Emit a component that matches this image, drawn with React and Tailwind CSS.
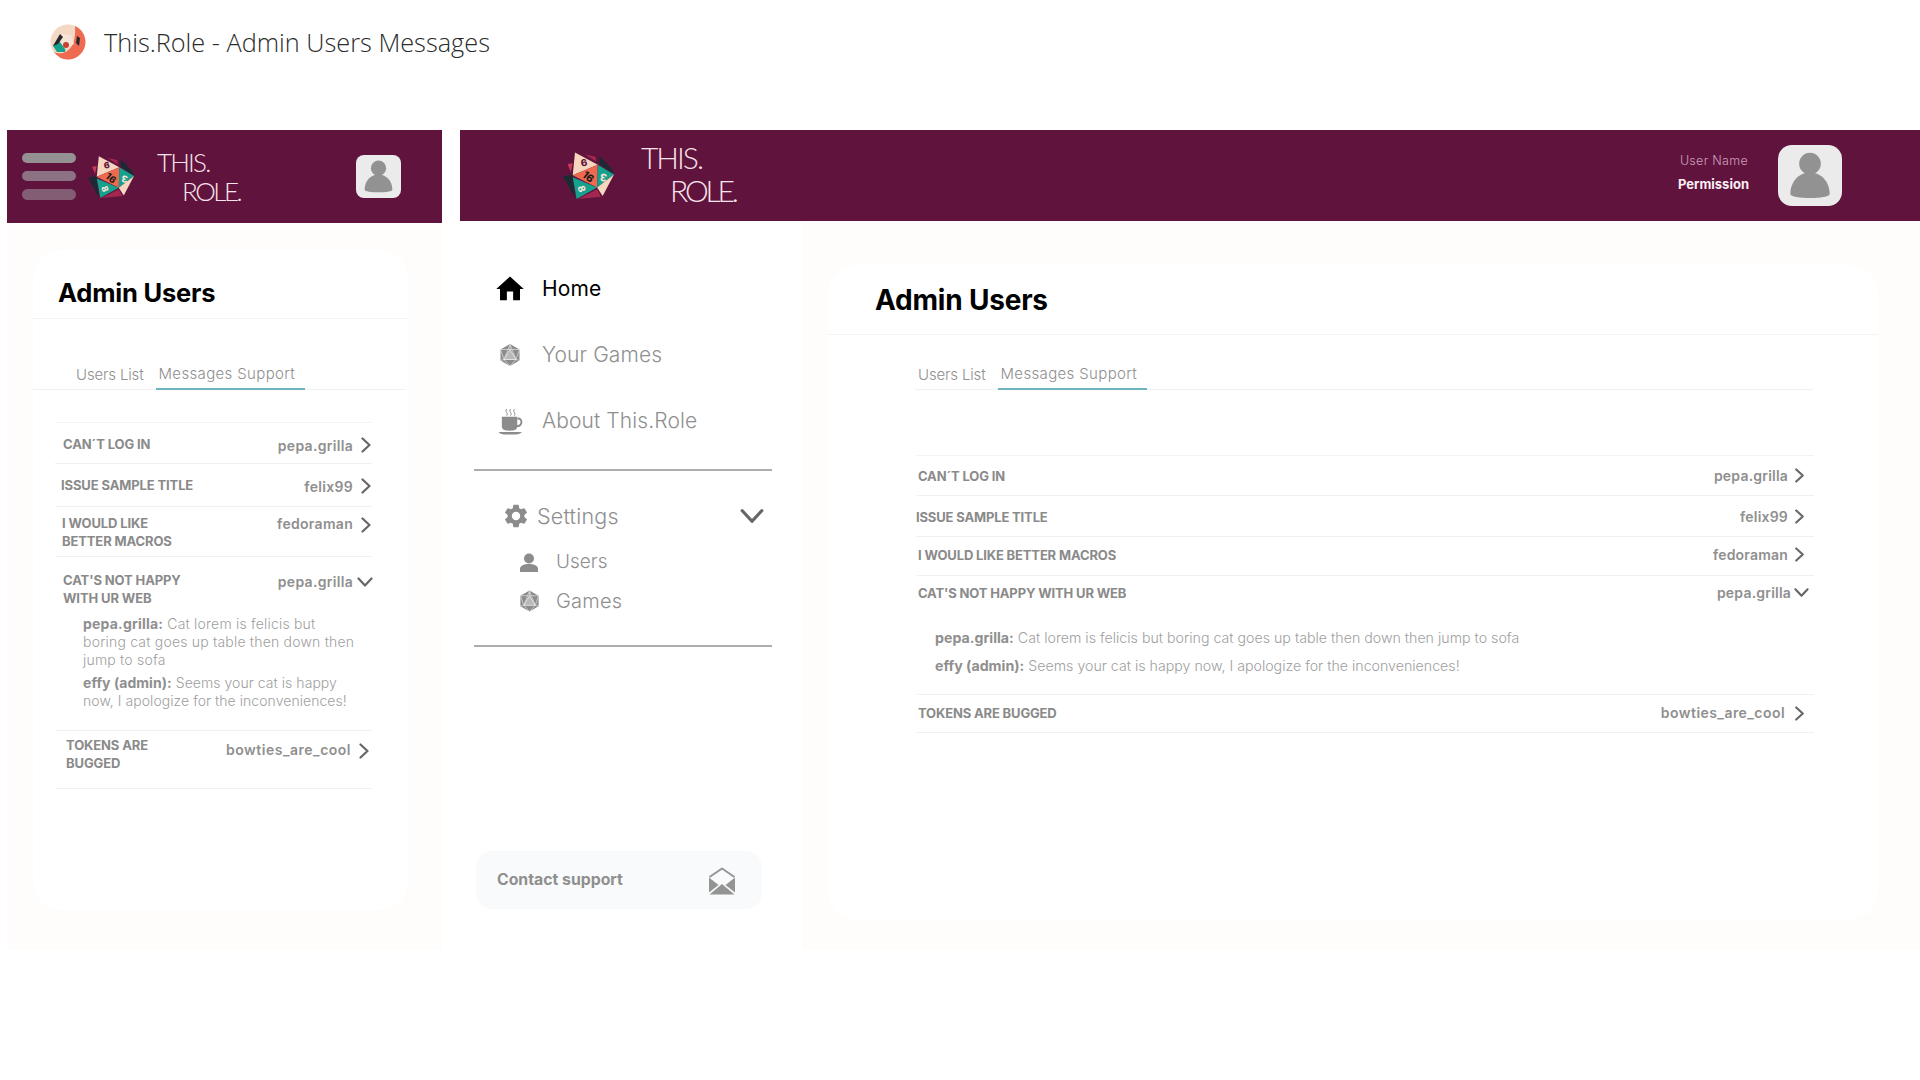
import { useState } from "react";

const SANS = "font-['Inter','Noto_Sans',sans-serif]";

const MESSAGES = [
  ["pepa.grilla:", "Cat lorem is felicis but boring cat goes up table then down then jump to sofa"],
  ["effy (admin):", "Seems your cat is happy now, I apologize for the inconveniences!"],
];

function Favicon() {
  return (
    <svg width="36" height="36" viewBox="0 0 36 36" className="shrink-0">
      <circle cx="18" cy="18" r="17.5" fill="#f3d9c4" />
      <path d="M25 2 A17.5 17.5 0 0 1 18 35.500 A17.500 17.500 0 0 1 4 28 C12 32 27 28 25 2z" fill="#ee6a50" />
      <path d="M3 22 L10 12 L16 20 L15 28 L7 28z" fill="#16a08e" />
      <path d="M10 10 L21 11 L24 20 L15 25 L10 18z" fill="#f6e4d6" />
      <path d="M3 22 L10 10 L13 13 L8 20z" fill="#2a2630" />
      <circle cx="16" cy="21" r="3" fill="#c9402f" />
      <path d="M27 12 L30 14 L29 22 L26 19z" fill="#2a2630" />
    </svg>
  );
}

function Dice({ className }) {
  return (
    <svg viewBox="305 78 163 150" className={className}>
      <path d="M420 92 L458 132 L465 150 L420 118z" fill="#1d2a33" />
      <path d="M308 155 L338 150 L345 222z" fill="#1d2a33" />
      <path d="M345 82 L415 120 L338 152z" fill="#f6d6bf" />
      <path d="M338 152 L415 120 L413 190z" fill="#ee6a4e" />
      <path d="M415 120 L465 150 L413 190z" fill="#16a08e" />
      <path d="M338 158 L413 190 L350 225z" fill="#16a08e" />
      <path d="M413 190 L465 150 L430 216z" fill="#f6d6bf" />
      <path d="M355 225 L413 195 L425 218z" fill="#a3284f" />
      <path d="M375 88 L408 95 L410 110z" fill="#a3284f" />
      <path d="M322 118 L338 115 L332 142z" fill="#c8385a" />
      <text x="372" y="122" fontSize="30" fontWeight="800" fill="#5f133d" textAnchor="middle" transform="rotate(170 372 112)">9</text>
      <text x="385" y="168" fontSize="32" fontWeight="800" fill="#1a1a1a" textAnchor="middle" transform="rotate(40 385 158)">16</text>
      <text x="433" y="168" fontSize="32" fontWeight="800" fill="#f6e4d6" textAnchor="middle" transform="rotate(190 433 158)">3</text>
      <text x="365" y="204" fontSize="30" fontWeight="800" fill="#f6e4d6" textAnchor="middle" transform="rotate(70 365 194)">8</text>
    </svg>
  );
}

function Avatar({ className }) {
  return (
    <div className={`bg-[#ebebeb] flex items-center justify-center shrink-0 ${className}`}>
      <svg viewBox="0 0 64 62" className="w-full h-full">
        <circle cx="32" cy="19" r="11" fill="#929292" />
        <path d="M12 50 C12 38 20 28 32 28 C44 28 52 38 52 50 C52 55 12 55 12 50z" fill="#929292" />
      </svg>
    </div>
  );
}

function D20({ className }) {
  return (
    <svg viewBox="0 0 24 24" className={className}>
      <path d="M12 1 L21.500 6.500 V17.500 L12 23 L2.500 17.500 V6.500z" fill="#8c8c8c" />
      <path d="M12 6.500 L18 16.500 H6z" fill="#b9b9b9" stroke="#e8e8e8" strokeWidth="0.9" />
      <path d="M12 1.500 L12 6.500 M12 1.500 L6 16.500 M12 1.500 L18 16.500 M2.500 6.500 L12 6.500 L21.500 6.500 M2.500 17.500 L6 16.500 M21.500 17.500 L18 16.500 M6 16.500 L12 23 L18 16.500 M2.500 6.500 L6 16.500 M21.500 6.500 L18 16.500" stroke="#e2e2e2" strokeWidth="0.7" fill="none" />
    </svg>
  );
}

function Cup() {
  return (
    <svg viewBox="0 0 26 28" className="w-[25px] h-[27px]">
      <path d="M9 1 q-1.500 2 0 3.500 q1.500 2 0 3.500 M13 1 q-1.500 2 0 3.500 q1.500 2 0 3.500 M17 1 q-1.500 2 0 3.500 q1.500 2 0 3.500" stroke="#8c8c8c" strokeWidth="1" fill="none" />
      <path d="M4 9 H20 V19 C20 23 17 23.500 12 23.500 C7 23.500 4 23 4 19z" fill="#8c8c8c" />
      <path d="M20 11 C26 10 26 19 19 19" stroke="#8c8c8c" strokeWidth="2" fill="none" />
      <path d="M0.500 25 H25 Q23 27.500 19 27.500 H6 Q2 27.500 0.500 25z" fill="#8c8c8c" />
    </svg>
  );
}

function Chevron({ open, className }) {
  return (
    <svg viewBox="0 0 16 16" className={className} fill="none" stroke="#666" strokeWidth="2.2" strokeLinecap="round" strokeLinejoin="round">
      {open ? <path d="M1.500 4.500 L8 11.500 L14.500 4.500" /> : <path d="M4.500 1.500 L11.500 8 L4.500 14.500" />}
    </svg>
  );
}

function LogoText({ className, roleClass }) {
  return (
    <div className={`font-['Lato',sans-serif] font-light text-[#f9e3ea] ${className}`}>
      <div>THIS.</div>
      <div className={roleClass}>ROLE.</div>
    </div>
  );
}

function Tabs({ className, firstClass }) {
  return (
    <div className={`flex items-end border-b border-[#f0f0f0] ${className}`}>
      <div className={`text-[15px] text-[#8f8f8f] font-light tracking-[-0.15px] pb-[3px] ${firstClass}`}>Users List</div>
      <div className="text-[15px] text-[#8f8f8f] font-light tracking-[0.35px] pb-[3px] pl-[3px] w-[149px] ml-[12px] -mb-px border-b-2 border-[#6db4bf] text-left whitespace-nowrap">
        Messages Support
      </div>
    </div>
  );
}

function Row({ title, user, open, className, titleClass, userClass, chevronClass, children }) {
  return (
    <div className={`border-b border-[#f0f0f0] ${className}`}>
      <div className="flex justify-between">
        <div className={`font-bold text-[#8a8a8a] uppercase ${titleClass}`}>{title}</div>
        <div className="flex items-start shrink-0">
          <span className={`font-semibold text-[#8f8f8f] ${userClass}`}>{user}</span>
          <Chevron open={open} className={chevronClass} />
        </div>
      </div>
      {children}
    </div>
  );
}

function Message({ who, text, className }) {
  return (
    <p className={`text-[#a0a0a0] font-light ${className}`}>
      <b className="font-bold text-[#8f8f8f]">{who}</b> {text}
    </p>
  );
}

function MobileView() {
  const title = "text-[13px] leading-[18px] tracking-[-0.12px]";
  const user = "text-[14px] leading-[18px] tracking-[0.3px]";
  const chev = "w-[16px] h-[16px] ml-[5px] mt-[2px] -mr-[2px]";
  return (
    <div className="w-[435px] shrink-0 flex flex-col">
      <div className="h-[93px] bg-[#5f133d] flex items-center relative">
        <div className="w-[54px] ml-[15px] flex flex-col gap-[8px] shrink-0">
          <div className="h-[10px] rounded-full bg-[#959193]" />
          <div className="h-[10px] rounded-full bg-[#8d7283]" />
          <div className="h-[11px] rounded-full bg-[#835d73]" />
        </div>
        <Dice className="w-[48px] h-[44px] ml-[11px] shrink-0" />
        <LogoText className="ml-[22px] text-[26px] leading-[29px] tracking-[-1.8px]" roleClass="ml-[25px] tracking-[-2.500px]" />
        <Avatar className="w-[45px] h-[43px] rounded-[8px] ml-auto mr-[41px] overflow-hidden" />
      </div>

      <div className="h-[727px] bg-[#fffdfb] pt-[27px] px-[26px]">
        <div className="w-[375px] h-[660px] bg-white rounded-[28px]">
          <div className="h-[69px] border-b border-[#f3f3f3] pl-[25px] pt-[25px]">
            <h2 className="text-[25.500px] leading-[36px] font-bold text-black tracking-[-0.2px]">Admin Users</h2>
          </div>
          <Tabs className="h-[71px] mr-[2px]" firstClass="ml-[43px]" />
          <div className="ml-[22px] w-[317px] mt-[32px] border-t border-[#f3f3f3]">
            <Row title="CAN´T LOG IN" user="pepa.grilla" className="h-[41px] pt-[12px] pl-[8px]" titleClass={title} userClass={`${user} mt-[2px]`} chevronClass={chev} />
            <Row title="ISSUE SAMPLE TITLE" user="felix99" className="h-[43px] pt-[12px] pl-[6px]" titleClass={title} userClass={`${user} mt-[2px]`} chevronClass={chev} />
            <Row title={<>I WOULD LIKE<br />BETTER MACROS</>} user="fedoraman" className="h-[50px] pt-[7px] pl-[7px]" titleClass={title} userClass={`${user} mt-[1px]`} chevronClass={`${chev} mt-[3px]`} />
            <Row title={<>CAT'S NOT HAPPY<br />WITH UR WEB</>} user="pepa.grilla" open className="h-[174px] pt-[14px] pl-[8px] pb-[4px]" titleClass={title} userClass={`${user} mt-[2px]`} chevronClass="w-[16px] h-[16px] ml-[4px] mt-[3px] -mr-[1px]">
              <div className="pl-[20px] pr-[6px] mt-[8px] flex flex-col gap-[5px]">
                <Message who={MESSAGES[0][0]} text={<>Cat lorem is felicis but<br />boring cat goes up table then down then jump to sofa</>} className="text-[14px] leading-[18px] tracking-[0.2px]" />
                <Message who={MESSAGES[1][0]} text={MESSAGES[1][1]} className="text-[14px] leading-[18px] tracking-[0.05px]" />
              </div>
            </Row>
            <Row title={<>TOKENS ARE<br />BUGGED</>} user="bowties_are_cool" className="h-[58px] pt-[5px] pl-[11px]" titleClass={title} userClass="text-[14px] leading-[18px] tracking-[0.5px] mt-[5px]" chevronClass="w-[16px] h-[16px] ml-[5px] mt-[7px]" />
          </div>
        </div>
      </div>
    </div>
  );
}

function NavItem({ icon, label, active }) {
  return (
    <div className="flex items-center h-[66px]">
      <div className="w-[82px] flex justify-center pl-[18px] pr-[0px]">
        <div className="w-[64px] flex justify-center">{icon}</div>
      </div>
      <span className={`text-[21px] tracking-[0.1px] font-light ${active ? "text-black font-normal" : "text-[#8f8f8f]"}`}>{label}</span>
    </div>
  );
}

function Sidebar() {
  return (
    <aside className="w-[342px] shrink-0 flex flex-col">
      <div className="pt-[35px]">
        <NavItem
          active
          label="Home"
          icon={
            <svg viewBox="0 0 24 24" className="w-[30px] h-[30px]" fill="#000">
              <path d="M9.500 21v-7h5v7h5.500v-9h3L12 2 1 12h3v9z" />
            </svg>
          }
        />
        <NavItem label="Your Games" icon={<D20 className="w-[24px] h-[24px]" />} />
        <NavItem label="About This.Role" icon={<Cup />} />
      </div>

      <div className="ml-[14px] w-[298px] h-[17px] border-b-2 border-[#adadad]" />

      <div className="ml-[14px] w-[298px] h-[176px] border-b-2 border-[#adadad]">
        <div className="flex items-center pt-[30px] pl-[30px]">
          <svg viewBox="0 0 24 24" className="w-[28px] h-[28px] -ml-[2px]" fill="#8c8c8c">
            <path d="M19.140 12.940c.040-.300.060-.610.060-.940s-.020-.640-.070-.940l2.030-1.580a.490.490 0 0 0 .120-.610l-1.920-3.320a.490.490 0 0 0-.590-.220l-2.390.960a7 7 0 0 0-1.620-.940l-.360-2.540a.480.480 0 0 0-.480-.410h-3.840a.470.470 0 0 0-.470.410l-.360 2.540c-.590.240-1.130.570-1.620.940l-2.390-.960a.480.480 0 0 0-.590.220L2.740 8.870a.470.470 0 0 0 .120.610l2.030 1.580c-.050.300-.090.630-.090.940s.020.640.070.940l-2.030 1.580a.490.490 0 0 0-.120.610l1.920 3.320c.120.220.370.290.590.220l2.390-.960c.500.380 1.030.700 1.620.940l.360 2.540c.050.240.240.410.480.410h3.840c.240 0 .440-.170.470-.410l.360-2.540c.590-.240 1.130-.560 1.620-.940l2.390.960c.220.080.470 0 .590-.220l1.920-3.320a.470.470 0 0 0-.120-.610zM12 15.600A3.600 3.600 0 1 1 12 8.400a3.600 3.600 0 0 1 0 7.200z" />
          </svg>
          <span className="text-[21.500px] leading-[30px] font-light text-[#8f8f8f] ml-[7px] tracking-[0.2px]">Settings</span>
          <Chevron open className="w-[24px] h-[24px] ml-auto mr-[8px]" />
        </div>
        <div className="flex items-center mt-[18px] h-[27px] pl-[45px]">
          <svg viewBox="0 0 20 20" className="w-[20px] h-[20px]" fill="#8c8c8c">
            <circle cx="10" cy="5.500" r="5" />
            <path d="M1 19 V16 C1 12.500 5 11 10 11 C15 11 19 12.500 19 16 V19z" />
          </svg>
          <span className="text-[19px] font-light text-[#8f8f8f] ml-[17px]">Users</span>
        </div>
        <div className="flex items-center mt-[11px] h-[27px] pl-[44px]">
          <D20 className="w-[23px] h-[24px]" />
          <span className="text-[20px] font-light text-[#8f8f8f] ml-[15px] tracking-[0.2px]">Games</span>
        </div>
      </div>

      <div className="ml-[16px] mt-[204px] w-[286px] h-[58px] bg-[#f9fafb] rounded-[16px] flex items-center justify-between pl-[21px] pr-[26px]">
        <span className="text-[15.800px] font-bold text-[#8f8f8f]">Contact support</span>
        <svg viewBox="0 0 28 28" className="w-[28px] h-[28px] mt-[1px]" fill="#949494">
          <path d="M1.500 10 L14 1.500 L26.500 10" fill="none" stroke="#949494" strokeWidth="2" strokeLinejoin="round" />
          <path d="M1 10.500 L10.500 18 L1 25.500z" />
          <path d="M27 10.500 L17.500 18 L27 25.500z" />
          <path d="M1.500 27.500 L14 17 L26.500 27.500z" />
        </svg>
      </div>
    </aside>
  );
}

function DesktopView() {
  const title = "text-[13px] leading-[18px] tracking-[-0.15px]";
  const user = "text-[14px] leading-[18px] tracking-[0.2px]";
  const chev = "w-[15px] h-[15px] ml-[4px] mt-[1px] -mr-[1px]";
  return (
    <div className="flex-1 flex flex-col min-w-0">
      <header className="h-[91px] bg-[#5f133d] flex items-center">
        <Dice className="w-[53px] h-[49px] ml-[102px] shrink-0" />
        <LogoText className="ml-[26px] mb-[3px] text-[30px] leading-[33px] tracking-[-2px]" roleClass="ml-[29px] tracking-[-3.200px]" />
        <div className="ml-auto mr-[29px] mb-[7px] text-right flex flex-col items-end gap-[6px]">
          <span className="text-[12.500px] leading-[18px] text-[#cf9fb8] font-light tracking-[0.3px] pr-[1px]">User Name</span>
          <span className="text-[13px] leading-[16px] font-bold text-[#fbeef3]">Permission</span>
        </div>
        <Avatar className="w-[64px] h-[61px] rounded-[14px] mr-[78px] overflow-hidden" />
      </header>

      <div className="flex h-[729px]">
        <Sidebar />
        <main className="flex-1 bg-[#fffdfb] pt-[44px] pl-[26px] pr-[42px]">
          <div className="h-[655px] bg-white rounded-[28px]">
            <div className="h-[70px] border-b border-[#f3f3f3] pl-[47px] pt-[16px]">
              <h2 className="text-[28px] leading-[38px] font-bold text-black tracking-[-0.2px]">Admin Users</h2>
            </div>
            <Tabs className="h-[55px] ml-[87px] mr-[65px]" firstClass="ml-[3px]" />
            <div className="ml-[89px] mr-[64px] mt-[65px] border-t border-[#f3f3f3]">
              <Row title="CAN´T LOG IN" user="pepa.grilla" className="h-[40px] pt-[11px] pl-[1px] pr-[8px]" titleClass={title} userClass={user} chevronClass={chev} />
              <Row title="ISSUE SAMPLE TITLE" user="felix99" className="h-[41px] pt-[12px] -ml-[1px] pr-[8px]" titleClass={`${title} tracking-[-0.3px]`} userClass={user} chevronClass={chev} />
              <Row title="I WOULD LIKE BETTER MACROS" user="fedoraman" className="h-[39px] pt-[9px] pl-[1px] pr-[8px]" titleClass={title} userClass={user} chevronClass={chev} />
              <Row title="CAT'S NOT HAPPY WITH UR WEB" user="pepa.grilla" open className="h-[119px] pt-[8px] pl-[1px] pr-[5px]" titleClass={title} userClass={user} chevronClass="w-[15px] h-[15px] ml-[3px] mt-[1px]">
                <div className="pl-[17px] mt-[27px] flex flex-col gap-[10px]">
                  <Message who={MESSAGES[0][0]} text={MESSAGES[0][1]} className="text-[14.200px] leading-[18px]" />
                  <Message who={MESSAGES[1][0]} text={MESSAGES[1][1]} className="text-[14.200px] leading-[18px]" />
                </div>
              </Row>
              <Row title="TOKENS ARE BUGGED" user="bowties_are_cool" className="h-[38px] pt-[9px] pl-[1px] pr-[8px]" titleClass={title} userClass="text-[14px] leading-[18px] tracking-[0.45px]" chevronClass="w-[15px] h-[15px] ml-[7px] mt-[2px] -mr-[1px]" />
            </div>
          </div>
        </main>
      </div>
    </div>
  );
}

export default function App() {
  const [title] = useState("This.Role - Admin Users Messages");

  return (
    <div className={`w-[1920px] h-[1080px] bg-white overflow-hidden ${SANS}`}>
      <div className="h-[130px] pl-[50px] pt-[24px] flex items-start">
        <Favicon />
        <h1 className="ml-[18px] font-['Open_Sans',sans-serif] font-light text-[25.300px] leading-[36px] text-[#2b2b2b]">{title}</h1>
      </div>
      <div className="flex pl-[7px] gap-[18px]">
        <MobileView />
        <DesktopView />
      </div>
    </div>
  );
}
